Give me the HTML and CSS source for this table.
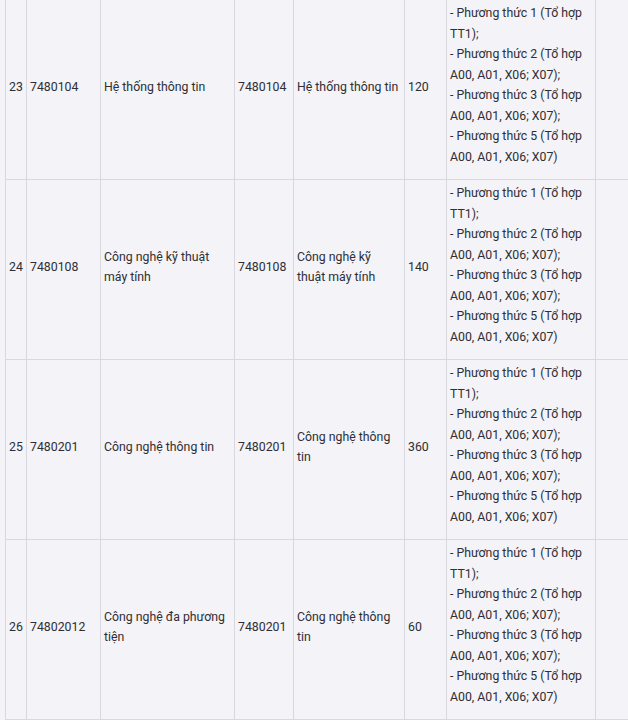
FILE: index.html
```html
<!DOCTYPE html>
<html lang="vi">
<head>
<meta charset="utf-8">
<link rel="stylesheet" href="styles.css">
</head>
<body>
<div class="wrap">
<table class="tbl">
  <colgroup>
    <col class="c1"><col class="c2"><col class="c3"><col class="c4"><col class="c5"><col class="c6"><col class="c7"><col class="c8">
  </colgroup>
  <tbody>
    <tr>
      <td>23</td><td>7480104</td><td>Hệ thống thông tin</td><td>7480104</td><td>Hệ thống thông tin</td><td>120</td>
      <td class="methods">- Phương thức 1 (Tổ hợp TT1);<br>- Phương thức 2 (Tổ hợp A00, A01, X06; X07);<br>- Phương thức 3 (Tổ hợp A00, A01, X06; X07);<br>- Phương thức 5 (Tổ hợp A00, A01, X06; X07)</td>
      <td></td>
    </tr>
    <tr>
      <td>24</td><td>7480108</td><td>Công nghệ kỹ thuật máy tính</td><td>7480108</td><td>Công nghệ kỹ thuật máy tính</td><td>140</td>
      <td class="methods">- Phương thức 1 (Tổ hợp TT1);<br>- Phương thức 2 (Tổ hợp A00, A01, X06; X07);<br>- Phương thức 3 (Tổ hợp A00, A01, X06; X07);<br>- Phương thức 5 (Tổ hợp A00, A01, X06; X07)</td>
      <td></td>
    </tr>
    <tr>
      <td>25</td><td>7480201</td><td>Công nghệ thông tin</td><td>7480201</td><td>Công nghệ thông tin</td><td>360</td>
      <td class="methods">- Phương thức 1 (Tổ hợp TT1);<br>- Phương thức 2 (Tổ hợp A00, A01, X06; X07);<br>- Phương thức 3 (Tổ hợp A00, A01, X06; X07);<br>- Phương thức 5 (Tổ hợp A00, A01, X06; X07)</td>
      <td></td>
    </tr>
    <tr>
      <td>26</td><td>74802012</td><td>Công nghệ đa phương tiện</td><td>7480201</td><td>Công nghệ thông tin</td><td>60</td>
      <td class="methods">- Phương thức 1 (Tổ hợp TT1);<br>- Phương thức 2 (Tổ hợp A00, A01, X06; X07);<br>- Phương thức 3 (Tổ hợp A00, A01, X06; X07);<br>- Phương thức 5 (Tổ hợp A00, A01, X06; X07)</td>
      <td></td>
    </tr>
  </tbody>
</table>
</div>
</body>
</html>
```
FILE: styles.css
```css
html, body {
  margin: 0;
  padding: 0;
  background: #f3f3f8;
  overflow: hidden;
}
.wrap {
  width: 628px;
  height: 720px;
  overflow: hidden;
  padding-left: 5px;
  box-sizing: border-box;
}
.tbl {
  border-collapse: collapse;
  table-layout: fixed;
  width: 670px;
  margin-top: -1px;
  font-family: Roboto, "Noto Sans", sans-serif;
  font-size: 12.3px;
  line-height: 20.5px;
  color: #2e2e33;
}
.tbl td {
  border: 1px solid #d8d8e0;
  padding: 3px 3px 8px 3px;
  vertical-align: middle;
  text-align: left;
}
.tbl td.methods {
  padding: 3px 3px 12px 3px;
}
.c1 { width: 21px; }
.c2 { width: 74px; }
.c3 { width: 134px; }
.c4 { width: 59px; }
.c5 { width: 111px; }
.c6 { width: 42px; }
.c7 { width: 149px; }
.c8 { width: 80px; }
```
